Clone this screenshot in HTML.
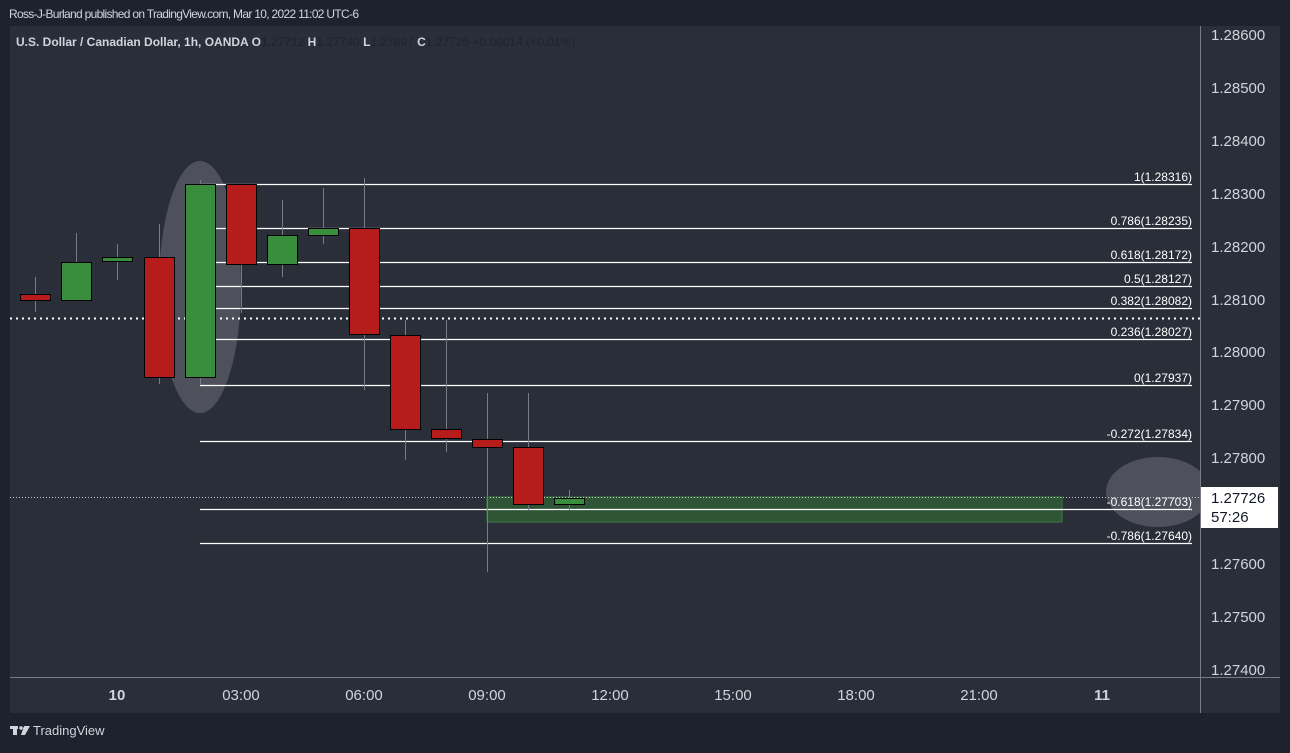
<!DOCTYPE html><html><head><style>
body{margin:0;width:1290px;height:748px;background:#1e222d;overflow:hidden;font-family:"Liberation Sans",sans-serif}
</style></head><body>
<svg width="1290" height="748" xmlns="http://www.w3.org/2000/svg" font-family="Liberation Sans, sans-serif">
<defs><clipPath id="c"><rect x="10" y="26" width="1190" height="651"/></clipPath></defs>
<rect width="1290" height="748" fill="#1e222d"/>
<text x="9" y="18" fill="#d1d4dc" font-size="12" textLength="350">Ross-J-Burland published on TradingView.com, Mar 10, 2022 11:02 UTC-6</text>
<rect x="10" y="26" width="1270" height="687" fill="#2a2e39"/>
<line x1="1200.5" y1="26" x2="1200.5" y2="713" stroke="#787b86"/>
<line x1="10" y1="677.5" x2="1280" y2="677.5" stroke="#787b86"/>
<text x="16" y="46" font-size="12" fill="#d1d4dc" font-weight="bold">U.S. Dollar / Canadian Dollar, 1h, OANDA <tspan>O</tspan><tspan fill="#1f2230" font-weight="normal">1.27712</tspan> H<tspan fill="#1f2230" font-weight="normal">1.27740</tspan> L<tspan fill="#1f2230" font-weight="normal">1.27697</tspan> C<tspan fill="#1f2230" font-weight="normal">1.27726</tspan><tspan fill="#1f2230" font-weight="normal"> +0.00014 (+0.01%)</tspan></text>
<g clip-path="url(#c)">
<ellipse cx="200" cy="287" rx="41" ry="126" fill="#4e505b"/>
<ellipse cx="1158" cy="492" rx="52" ry="35" fill="#4e505b"/>
</g>
<rect x="487" y="497" width="575" height="25" fill="#2f5a35" fill-opacity="0.9" stroke="#3b7a40"/>
<g stroke="#ffffff" stroke-width="1.3">
<line x1="200" y1="184.5" x2="1192" y2="184.5"/><line x1="200" y1="228.5" x2="1192" y2="228.5"/>
<line x1="200" y1="262.5" x2="1192" y2="262.5"/><line x1="200" y1="286.5" x2="1192" y2="286.5"/>
<line x1="200" y1="308.5" x2="1192" y2="308.5"/><line x1="200" y1="339.5" x2="1192" y2="339.5"/>
<line x1="200" y1="385.5" x2="1192" y2="385.5"/><line x1="200" y1="441.5" x2="1192" y2="441.5"/>
<line x1="200" y1="509.5" x2="1192" y2="509.5"/><line x1="200" y1="543.5" x2="1192" y2="543.5"/>
</g>
<g fill="#ffffff" font-size="12" text-anchor="end">
<text x="1192" y="181">1(1.28316)</text><text x="1192" y="225">0.786(1.28235)</text>
<text x="1192" y="259">0.618(1.28172)</text><text x="1192" y="283">0.5(1.28127)</text>
<text x="1192" y="305">0.382(1.28082)</text><text x="1192" y="336">0.236(1.28027)</text>
<text x="1192" y="382">0(1.27937)</text><text x="1192" y="438">-0.272(1.27834)</text>
<text x="1192" y="506">-0.618(1.27703)</text><text x="1192" y="540">-0.786(1.27640)</text>
</g>
<line x1="10" y1="318.5" x2="1200" y2="318.5" stroke="#fff" stroke-width="2" stroke-dasharray="2,4"/>
<line x1="10" y1="497.5" x2="1200" y2="497.5" stroke="#c8c8c8" stroke-width="1" stroke-dasharray="1,2"/>
<g stroke="#787b86" stroke-width="1">
<line x1="35.5" y1="277" x2="35.5" y2="312"/><line x1="76.5" y1="233" x2="76.5" y2="300"/>
<line x1="117.5" y1="244" x2="117.5" y2="280"/><line x1="159.5" y1="224" x2="159.5" y2="384"/>
<line x1="200.5" y1="180" x2="200.5" y2="385"/><line x1="241.5" y1="184" x2="241.5" y2="313"/>
<line x1="282.5" y1="200" x2="282.5" y2="277"/><line x1="323.5" y1="188" x2="323.5" y2="244"/>
<line x1="364.5" y1="178" x2="364.5" y2="390"/><line x1="405.5" y1="320" x2="405.5" y2="460"/>
<line x1="446.5" y1="320" x2="446.5" y2="452"/><line x1="487.5" y1="393" x2="487.5" y2="572"/>
<line x1="528.5" y1="393" x2="528.5" y2="510"/><line x1="569.5" y1="490" x2="569.5" y2="510"/>
</g>
<g stroke="#000" stroke-width="1">
<rect x="20.5" y="294.5" width="30" height="6" fill="#b71c1c"/>
<rect x="61.5" y="262.5" width="30" height="38" fill="#388e3c"/>
<rect x="102.5" y="257.5" width="30" height="4" fill="#388e3c"/>
<rect x="144.5" y="257.5" width="30" height="120" fill="#b71c1c"/>
<rect x="185.5" y="184.5" width="30" height="193" fill="#388e3c"/>
<rect x="226.5" y="184.5" width="30" height="80" fill="#b71c1c"/>
<rect x="267.5" y="235.5" width="30" height="29" fill="#388e3c"/>
<rect x="308.5" y="228.5" width="30" height="7" fill="#388e3c"/>
<rect x="349.5" y="228.5" width="30" height="106" fill="#b71c1c"/>
<rect x="390.5" y="335.5" width="30" height="94" fill="#b71c1c"/>
<rect x="431.5" y="429.5" width="30" height="9" fill="#b71c1c"/>
<rect x="472.5" y="439.5" width="30" height="8" fill="#b71c1c"/>
<rect x="513.5" y="447.5" width="30" height="57" fill="#b71c1c"/>
<rect x="554.5" y="498.5" width="30" height="6" fill="#388e3c"/>
</g>
<g fill="#d1d4dc" font-size="15" text-anchor="start">
<text x="1211" y="40">1.28600</text><text x="1211" y="93">1.28500</text><text x="1211" y="146">1.28400</text>
<text x="1211" y="199">1.28300</text><text x="1211" y="252">1.28200</text><text x="1211" y="305">1.28100</text>
<text x="1211" y="357">1.28000</text><text x="1211" y="410">1.27900</text><text x="1211" y="463">1.27800</text>
<text x="1211" y="569">1.27600</text><text x="1211" y="622">1.27500</text><text x="1211" y="675">1.27400</text>
</g>
<rect x="1201" y="487" width="77" height="41" fill="#ffffff"/>
<text x="1211" y="503" fill="#131722" font-size="15">1.27726</text>
<text x="1211" y="522" fill="#131722" font-size="15">57:26</text>
<g fill="#d1d4dc" font-size="15" text-anchor="middle">
<text x="117" y="700" font-weight="bold">10</text><text x="241" y="700">03:00</text><text x="364" y="700">06:00</text>
<text x="487" y="700">09:00</text><text x="610" y="700">12:00</text><text x="733" y="700">15:00</text>
<text x="856" y="700">18:00</text><text x="979" y="700">21:00</text><text x="1102" y="700" font-weight="bold">11</text>
</g>
<g fill="#d1d4dc">
<rect x="10" y="726" width="8" height="3"/><rect x="13" y="726" width="4" height="9"/>
<circle cx="21" cy="728" r="1.8"/><path d="M24 726h6l-5 9h-4z"/>
</g>
<text x="33" y="735" fill="#d1d4dc" font-size="13">TradingView</text>
</svg>
</body></html>
